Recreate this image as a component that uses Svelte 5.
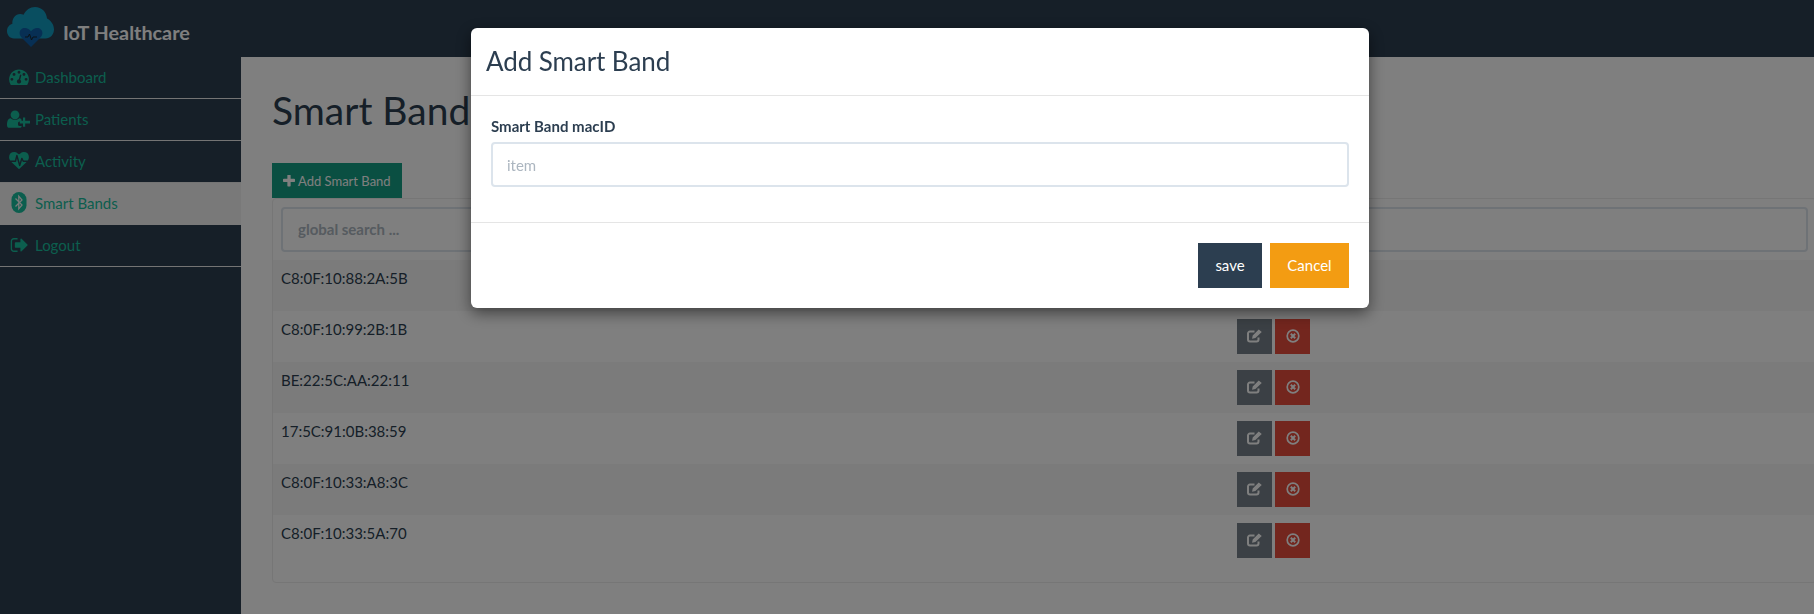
<script>
  const nav = [
    { label: 'Dashboard', icon: 'dash' },
    { label: 'Patients', icon: 'user' },
    { label: 'Activity', icon: 'heart' },
    { label: 'Smart Bands', icon: 'bt', active: true },
    { label: 'Logout', icon: 'out' }
  ];
  const bands = ['C8:0F:10:88:2A:5B', 'C8:0F:10:99:2B:1B', 'BE:22:5C:AA:22:11', '17:5C:91:0B:38:59', 'C8:0F:10:33:A8:3C', 'C8:0F:10:33:5A:70'];
</script>

<div class="page">
  <header class="topbar">
    <svg class="logo" viewBox="0 0 60 50" width="60" height="50" aria-hidden="true">
      <path fill="#129cc0" d="M14 38.500c-4.300 0-7-3.700-7-7.500 0-3.600 2.200-6.200 5.400-7.200-.6-5 3-9.800 7.800-9.800 1.300 0 2.400.3 3.400.7C26 10 30 7 35 7c6.600 0 11.600 5 12 11.500 3.800 2 7 6 7 11 0 5-3.800 9-8.500 9z"/>
      <path fill="#0e5fa8" d="M31 47 22 38c-2-2-2.400-3.600-2.400-5 0-3 2.400-5 5.300-5 2.500 0 4.600 1.300 6.100 3.200 1.500-1.900 3.600-3.200 6.100-3.200 2.900 0 5.300 2 5.300 5 0 1.400-.4 3-2.400 5z"/>
      <path fill="none" stroke="#16222c" stroke-width="1" d="M25 37h3l1.500-3 2 6 1.500-3h4"/>
    </svg>
    <span class="brand">IoT Healthcare</span>
  </header>

  <div class="shell">
    <nav class="sidebar">
      {#each nav as item}
        <a class="nav-item" class:active={item.active} href="#top">
          <span class="nav-icon">
            {#if item.icon === 'dash'}
              <svg viewBox="0 128 1792 1536" width="20" height="17"><path d="M384 1152q0-53-37.500-90.500t-90.500-37.500-90.500 37.500-37.500 90.500 37.500 90.500 90.500 37.500 90.500-37.500 37.500-90.500zm192-448q0-53-37.500-90.500t-90.500-37.500-90.500 37.500-37.500 90.500 37.500 90.500 90.500 37.500 90.500-37.500 37.500-90.500zm428 481l101-382q6-26-7.500-48.500t-38.500-29.500-48 6.500-30 39.500l-101 382q-60 5-107 43.500t-63 98.500q-20 77 20 146t117 89 146-20 89-117q16-60-6-117t-72-91zm660-33q0-53-37.500-90.500t-90.500-37.500-90.500 37.500-37.500 90.500 37.500 90.500 90.500 37.500 90.500-37.500 37.500-90.500zm-640-640q0-53-37.500-90.500t-90.500-37.500-90.500 37.500-37.500 90.500 37.500 90.500 90.500 37.500 90.500-37.500 37.500-90.500zm448 192q0-53-37.500-90.500t-90.500-37.500-90.500 37.500-37.500 90.500 37.500 90.500 90.500 37.500 90.500-37.500 37.500-90.500zm320 448q0 261-141 483-19 29-54 29h-1402q-35 0-54-29-141-221-141-483 0-182 71-348t191-286 286-191 348-71 348 71 286 191 191 286 71 348z"/></svg>
            {:else if item.icon === 'user'}
              <svg viewBox="0 0 23 18" width="23" height="18"><circle cx="8" cy="4.800" r="4.400"/><path d="M0 15.200c0-4 1-6.800 3.800-7 1 .9 2.500 1.600 4.200 1.600s3.200-.7 4.200-1.600c1 .1 1.700.5 2.300 1.200v2h-1.800a1.700 1.700 0 0 0-1.700 1.700v1.300a1.700 1.700 0 0 0 1.700 1.700h1.800v.8c-.5.500-1.200.9-2 .9H2.500C.9 17.800 0 16.800 0 15.200z"/><path d="M16 7.600h2.200v3.200H23v2.600h-4.800v3.400H16v-3.400h-3.200v-2.600H16z"/></svg>
            {:else if item.icon === 'heart'}
              <svg viewBox="0 128 1792 1536" width="20" height="17"><path d="M1280 1024h305q-5 6-10 10.500t-9 7.500l-3 4-623 600q-18 18-44 18t-44-18l-624-602q-5-2-21-20h369q22 0 39.500-13.500t22.500-34.500l70-281 190 667q6 20 23 33t39 13q21 0 38-13t23-33l146-485 56 112q18 35 57 35zm512-428q0 145-103 300h-369l-111-221q-8-17-25.500-27t-36.500-8q-45 5-56 46l-129 430-196-686q-6-20-23.500-33t-39.500-13-39 13.500-22 34.500l-116 464h-423q-103-155-103-300 0-220 127-344t351-124q62 0 126.500 21.500t120 58 95.500 68.500 76 68q36-36 76-68t95.500-68.500 120-58 126.500-21.500q224 0 351 124t127 344z"/></svg>
            {:else if item.icon === 'bt'}
              <svg viewBox="0 0 16 21" width="16" height="21"><rect x="0.500" y="0" width="15" height="21" rx="7.500"/><path d="M4.500 6.500 11 13l-3.200 3.800V4.200L11 8l-6.500 6.500" fill="none" stroke="#f2f2f2" stroke-width="1.300"/></svg>
            {:else}
              <svg viewBox="0 256 1664 1280" width="18" height="14"><path d="M704 1440q0 4 1 20t.5 26.500-3 23.500-10 19.500-20.500 6.500h-320q-119 0-203.500-84.500t-84.500-203.500v-704q0-119 84.500-203.500t203.500-84.500h320q13 0 22.500 9.500t9.500 22.500q0 4 1 20t.5 26.500-3 23.500-10 19.500-20.500 6.500h-320q-66 0-113 47t-47 113v704q0 66 47 113t113 47h312l11.500 1 11.500 3 8 5.500 7 9 2 13.500zm928-544q0 26-19 45l-544 544q-19 19-45 19t-45-19-19-45v-288h-448q-26 0-45-19t-19-45v-384q0-26 19-45t45-19h448v-288q0-26 19-45t45-19 45 19l544 544q19 19 19 45z"/></svg>
            {/if}
          </span>
          <span>{item.label}</span>
        </a>
      {/each}
    </nav>

    <main class="content">
      <h1>Smart Bands</h1>
      <button class="add-btn">
        <svg viewBox="192 192 1408 1408" width="12" height="12"><path d="M1600 736v192q0 40-28 68t-68 28h-416v416q0 40-28 68t-68 28h-192q-40 0-68-28t-28-68v-416h-416q-40 0-68-28t-28-68v-192q0-40 28-68t68-28h416v-416q0-40 28-68t68-28h192q40 0 68 28t28 68v416h416q40 0 68 28t28 68z"/></svg>
        Add Smart Band
      </button>
      <section class="panel">
        <div class="search-wrap">
          <input class="search" placeholder="global search ..." />
        </div>
        {#each bands as mac}
          <div class="row">
            <span class="mac">{mac}</span>
            <span class="actions">
              <button class="icon-btn edit" aria-label="Edit">
                <svg viewBox="0 0 15 14" width="15" height="14" fill="none" stroke="#fff"><path stroke-width="2" d="M11.500 8.500V10.500a2 2 0 0 1-2 2H3a2 2 0 0 1-2-2V4.500a2 2 0 0 1 2-2h4.500"/><path stroke-width="1.500" d="M6 8.800 6.400 6.800 11.800 1.600 13.600 3 8 8.300z" fill="#fff"/></svg>
              </button>
              <button class="icon-btn del" aria-label="Delete">
                <svg viewBox="0 0 14 14" width="14" height="14" fill="none" stroke="#fff"><circle cx="7" cy="7" r="5.800" stroke-width="1.700"/><path stroke-width="2" d="M4.800 4.800l4.400 4.400M9.200 4.800 4.800 9.200"/></svg>
              </button>
            </span>
          </div>
        {/each}
      </section>
    </main>
  </div>

  <div class="backdrop"></div>
  <div class="modal-wrap">
    <div class="modal">
      <div class="modal-header"><h2>Add Smart Band</h2></div>
      <div class="modal-body">
        <label for="mac">Smart Band macID</label>
        <input id="mac" class="field" placeholder="item" />
      </div>
      <div class="modal-footer">
        <button class="btn save">save</button>
        <button class="btn cancel">Cancel</button>
      </div>
    </div>
  </div>
</div>

<style>
  :global(body) {
    margin: 0;
    background: #fff;
    overflow: hidden;
  }
  .page {
    height: 614px;
    overflow: hidden;
    display: flex;
    flex-direction: column;
    font-family: Lato, "Open Sans", sans-serif;
    font-size: 15px;
    color: #2c3e50;
  }
  .topbar {
    height: 57px;
    flex: none;
    background: #2c3e50;
    display: flex;
    align-items: center;
    box-sizing: border-box;
  }
  .logo {
    margin-top: -7px;
    flex: none;
  }
  .brand {
    font-size: 19.8px;
    font-weight: 700;
    color: #fff;
    margin: 7px 0 0 3px;
  }
  .shell {
    flex: 1;
    display: flex;
    min-height: 0;
  }
  .sidebar {
    width: 241px;
    flex: none;
    background: #2c3e50;
  }
  .nav-item {
    height: 42px;
    box-sizing: border-box;
    display: flex;
    align-items: center;
    border-bottom: 1px solid #e8e8e8;
    color: #18bc9c;
    text-decoration: none;
    padding-bottom: 2px;
  }
  .nav-item.active {
    background: #f2f2f2;
    border-bottom-color: #f2f2f2;
    color: #18bc9c;
  }
  .nav-icon {
    width: 33px;
    padding-left: 2px;
    flex: none;
    display: flex;
    justify-content: center;
    align-items: center;
  }
  .nav-icon svg {
    fill: #18bc9c;
    display: block;
  }
  .content {
    flex: 1;
    min-width: 0;
    padding: 30px 0 0 31px;
    margin-right: -3px;
    display: flex;
    flex-direction: column;
    align-items: flex-start;
  }
  h1 {
    font-size: 39px;
    font-weight: 400;
    line-height: 47px;
    margin: 0 0 29px;
    color: #2c3e50;
  }
  .add-btn {
    width: 130px;
    height: 35px;
    background: #149e84;
    color: #fff;
    border: 0;
    padding: 0 0 0 11px;
    font: 13px Lato, sans-serif;
    display: flex;
    align-items: center;
    gap: 3px;
    flex: none;
  }
  .add-btn svg {
    fill: #fff;
  }
  .panel {
    align-self: stretch;
    height: 385px;
    box-sizing: border-box;
    border: 1px solid #ececec;
    border-radius: 4px;
    background: #fff;
  }
  .search-wrap {
    padding: 8px;
  }
  .search {
    display: block;
    width: 100%;
    height: 45px;
    box-sizing: border-box;
    border: 2px solid #dce4ec;
    border-radius: 4px;
    padding: 0 14px 2px 15px;
    font: 700 15px Lato, sans-serif;
    outline: none;
  }
  .search::placeholder {
    color: #acb6c0;
    opacity: 1;
  }
  .row {
    height: 51px;
    box-sizing: border-box;
    display: flex;
    padding: 8px 0 0 8px;
    line-height: 20px;
  }
  .row:nth-child(even) {
    background: #f7f7f7;
  }
  .mac {
    width: 956px;
    flex: none;
  }
  .actions {
    display: flex;
    gap: 3px;
  }
  .icon-btn {
    width: 35px;
    height: 35px;
    border: 0;
    padding: 0 0 2px;
    display: flex;
    align-items: center;
    justify-content: center;
  }
  .edit {
    background: #76808a;
  }
  .del {
    background: #e74c3c;
  }
  .backdrop {
    position: fixed;
    inset: 0;
    background: rgba(0, 0, 0, 0.5);
  }
  .modal-wrap {
    position: fixed;
    inset: 0;
    padding: 28px 0 0 471px;
  }
  .modal {
    width: 898px;
    height: 280px;
    box-sizing: border-box;
    background: #fff;
    border-radius: 6px;
    box-shadow: 0 5px 15px rgba(0, 0, 0, 0.5);
    display: flex;
    flex-direction: column;
  }
  .modal-header {
    height: 68px;
    box-sizing: border-box;
    border-bottom: 1px solid #e5e5e5;
    padding-left: 15px;
    display: flex;
    align-items: center;
  }
  h2 {
    font-size: 26px;
    font-weight: 400;
    margin: 0;
    line-height: 1.1;
    color: #2c3e50;
    letter-spacing: -0.08px;
  }
  .modal-body {
    height: 127px;
    box-sizing: border-box;
    padding: 20px 20px 0;
    border-bottom: 1px solid #e5e5e5;
  }
  label {
    display: block;
    font-weight: 700;
    line-height: 21px;
    margin-bottom: 5px;
  }
  .field {
    display: block;
    width: 100%;
    height: 45px;
    box-sizing: border-box;
    border: 2px solid #dce4ec;
    border-radius: 4px;
    padding: 0 14px;
    font: 15px Lato, sans-serif;
    outline: none;
  }
  .field::placeholder {
    color: #acb6c0;
    opacity: 1;
  }
  .modal-footer {
    flex: 1;
    display: flex;
    justify-content: flex-end;
    gap: 8px;
    padding: 20px;
    box-sizing: border-box;
  }
  .btn {
    height: 45px;
    border: 0;
    color: #fff;
    font: 15px Lato, sans-serif;
    padding: 0 0 2px;
  }
  .save {
    width: 64px;
    background: #2c3e50;
  }
  .cancel {
    width: 79px;
    background: #f39c12;
  }
</style>
